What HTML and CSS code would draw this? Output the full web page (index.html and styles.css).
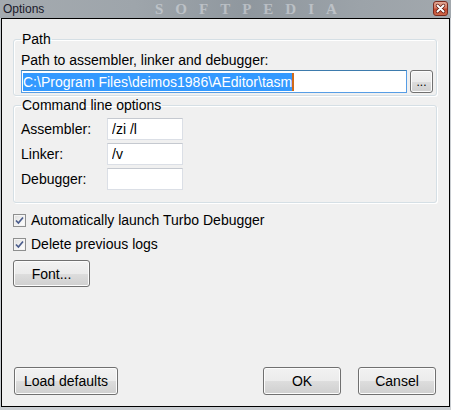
FILE: index.html
```html
<!DOCTYPE html>
<html lang="en">
<head>
    <meta charset="UTF-8">
    <title>Options</title>
    <link rel="stylesheet" href="styles.css">
</head>
<body>

    <div class="window">
        <!-- Caption bar -->
        <div class="titlebar">
            <span class="title">Options</span>
            <span class="watermark">SOFTPEDIA</span>
            <span class="close">
                <svg width="15" height="15" viewBox="0 0 15 15">
                    <path d="M4.5 4.5 L10.5 10.5 M10.5 4.5 L4.5 10.5" stroke="#5a1a10" stroke-width="3.4" stroke-linecap="round"/>
                    <path d="M4.5 4.5 L10.5 10.5 M10.5 4.5 L4.5 10.5" stroke="#ffffff" stroke-width="2" stroke-linecap="round"/>
                </svg>
            </span>
        </div>

        <div class="client">
            <fieldset class="group group-path">
                <legend>Path</legend>
                <p class="caption">Path to assembler, linker and debugger:</p>
                <div class="path-row">
                    <div class="textbox textbox-focus"><span class="selected">C:\Program Files\deimos1986\AEditor\tasm</span><span class="caret"></span></div>
                    <button class="btn btn-browse">...</button>
                </div>
            </fieldset>

            <fieldset class="group group-options">
                <legend>Command line options</legend>
                <div class="field-row">
                    <label class="field-label">Assembler:</label>
                    <input class="field-input" type="text" value="/zi /l">
                </div>
                <div class="field-row">
                    <label class="field-label">Linker:</label>
                    <input class="field-input" type="text" value="/v">
                </div>
                <div class="field-row">
                    <label class="field-label">Debugger:</label>
                    <input class="field-input" type="text" value="">
                </div>
            </fieldset>

            <div class="check-row check-first">
                <span class="checkbox">
                    <svg width="9" height="9" viewBox="0 0 9 9">
                        <path d="M1 4.5 L3.4 7 L8 1.5" fill="none" stroke="#4a5c8c" stroke-width="1.7"/>
                    </svg>
                </span>
                <span>Automatically launch Turbo Debugger</span>
            </div>
            <div class="check-row">
                <span class="checkbox">
                    <svg width="9" height="9" viewBox="0 0 9 9">
                        <path d="M1 4.5 L3.4 7 L8 1.5" fill="none" stroke="#4a5c8c" stroke-width="1.7"/>
                    </svg>
                </span>
                <span>Delete previous logs</span>
            </div>

            <button class="btn btn-font">Font...</button>

            <div class="footer">
                <button class="btn btn-defaults">Load defaults</button>
                <div class="footer-right">
                    <button class="btn btn-dialog">OK</button>
                    <button class="btn btn-dialog">Cansel</button>
                </div>
            </div>
        </div>
    </div>

</body>
</html>
```

FILE: styles.css
```css
/* Page and window frame */
body {
    margin: 0;
    background-color: #c9cdd1;
    font-family: 'Liberation Sans', Arial, sans-serif;
    font-size: 14px;
    color: #000;
}

.window {
    width: 451px;
    height: 410px;
    display: flex;
    flex-direction: column;
}

/* Caption bar */
.titlebar {
    height: 18px;
    display: flex;
    align-items: center;
    overflow: hidden;
    background: linear-gradient(90deg, #a4aaaf 0%, #9ea5ab 30%, #8f979e 55%, #9ca3a9 80%, #a2a8ad 100%);
}

.title {
    margin-left: 3px;
    font-family: 'Liberation Sans', Arial, sans-serif;
    font-size: 12px;
    color: #1a1a2a;
    width: 152px;
}

.watermark {
    font-family: 'Liberation Serif', serif;
    font-weight: bold;
    font-size: 15px;
    line-height: 16px;
    letter-spacing: 12px;
    color: rgba(225, 228, 232, 0.5);
}

.close {
    margin-left: auto;
    margin-right: 3px;
    width: 15px;
    height: 15px;
    margin-top: -1px;
    border: 1px solid #7a2b1f;
    border-radius: 3px;
    box-sizing: border-box;
    background: linear-gradient(#e3a996 0%, #d77a62 45%, #c3462d 55%, #cf6a4c 100%);
    display: flex;
    align-items: center;
    justify-content: center;
}

.close svg {
    margin: -1px;
}

/* Client area */
.client {
    flex: 1;
    margin: 0 1px 3px 1px;
    border: 1px solid #000;
    background-color: #f0f0f0;
    display: flex;
    flex-direction: column;
    padding: 0 12px 11px 11px;
}

/* Group boxes */
.group {
    margin: 0;
    border: 1px solid #d5dfe5;
    border-radius: 3px;
    box-shadow: inset 1px 1px 0 #fff, 1px 1px 0 #fff;
    padding: 5px 3px 2px 7px;
}

.group legend {
    padding: 0 1px;
    line-height: 16px;
}

.group-path {
    margin-top: 12px;
}

.group-options {
    margin-top: 1px;
    padding-bottom: 12px;
}

.caption {
    margin: 0;
    line-height: 16px;
}

.path-row {
    display: flex;
    margin-top: 2px;
}

/* Text boxes */
.textbox {
    flex: 1;
    height: 23px;
    box-sizing: border-box;
    background-color: #fff;
    border: 1px solid #abadb3;
    display: flex;
    align-items: center;
    padding-left: 1px;
}

.textbox-focus {
    border-color: #569de5;
    border-top-color: #3d7bad;
}

.selected {
    background-color: #3399ff;
    color: #fff;
    line-height: 18px;
}

.caret {
    width: 2px;
    height: 18px;
    background-color: #d06a1a;
}

.field-row {
    display: flex;
    align-items: center;
    margin-bottom: 3px;
}

.field-row:last-child {
    margin-bottom: 0;
}

.field-label {
    width: 86px;
    line-height: 16px;
}

.field-input {
    width: 76px;
    height: 22px;
    box-sizing: border-box;
    margin: 0;
    padding: 0 0 0 4px;
    border: 1px solid #dbdfe6;
    border-top-color: #c5c9d0;
    background-color: #fff;
    font-family: 'Liberation Sans', Arial, sans-serif;
    font-size: 14px;
    color: #000;
}

/* Check boxes */
.check-row {
    display: flex;
    align-items: center;
    height: 16px;
    margin-top: 8px;
    gap: 5px;
}

.check-first {
    margin-top: 9px;
}

.checkbox {
    width: 13px;
    height: 13px;
    box-sizing: border-box;
    border: 1px solid #8e8f8f;
    background: linear-gradient(135deg, #dcdcdc 0%, #f4f4f4 60%, #ffffff 100%);
    box-shadow: inset 0 0 0 1px #f4f4f4;
    display: flex;
    align-items: center;
    justify-content: center;
}

/* Push buttons */
.btn {
    box-sizing: border-box;
    height: 27px;
    margin: 0;
    padding: 0;
    border: 1px solid #707070;
    border-radius: 3px;
    background: linear-gradient(#f2f2f2 0%, #ebebeb 50%, #dddddd 51%, #cfcfcf 100%);
    box-shadow: inset 0 0 0 1px #fcfcfc;
    font-family: 'Liberation Sans', Arial, sans-serif;
    font-size: 14px;
    color: #000;
}

.btn-browse {
    width: 23px;
    height: 23px;
    margin-left: 3px;
    font-size: 12px;
    line-height: 14px;
}

.btn-font {
    width: 77px;
    margin-top: 8px;
    align-self: flex-start;
}

.footer {
    margin-top: auto;
    display: flex;
    align-items: center;
    padding: 0 1px;
}

.btn-defaults {
    width: 104px;
    height: 28px;
}

.footer-right {
    margin-left: auto;
    display: flex;
    gap: 17px;
}

.btn-dialog {
    width: 78px;
    height: 28px;
}
```
